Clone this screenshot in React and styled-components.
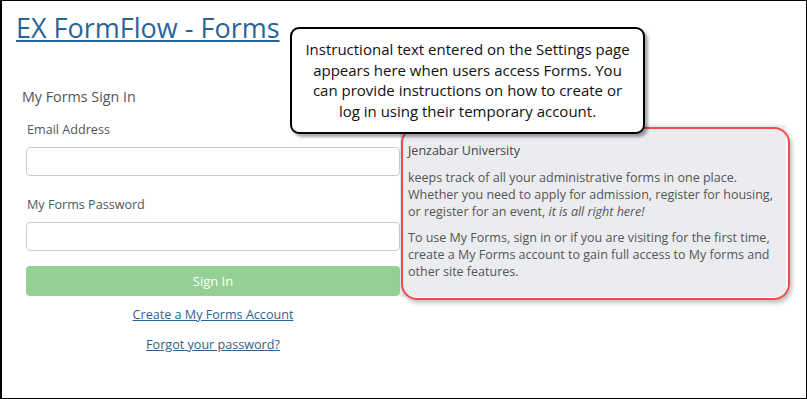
import React from 'react';
import styled, { createGlobalStyle } from 'styled-components';

const GlobalStyle = createGlobalStyle`
  html, body {
    margin: 0;
    padding: 0;
    background: #fff;
  }
  body {
    font-family: "Open Sans", "Liberation Sans", sans-serif;
  }
`;

const Frame = styled.div`
  position: relative;
  box-sizing: border-box;
  width: 807px;
  height: 399px;
  border: 1px solid #000;
  border-left-width: 2px;
  overflow: hidden;
`;

const Title = styled.a`
  display: inline-block;
  margin: 11px 0 0 14px;
  font-size: 27px;
  line-height: 32px;
  color: #2a6496;
  text-decoration: underline;
  text-decoration-thickness: 1.5px;
  text-underline-offset: 2px;
`;

const SignInHeading = styled.h2`
  margin: 43px 0 0 20px;
  font-size: 14.3px;
  font-weight: 400;
  line-height: 20px;
  color: #555;
`;

const Row = styled.div`
  display: flex;
  align-items: flex-start;
  margin-top: 12px;
`;

const FormColumn = styled.form`
  display: flex;
  flex-direction: column;
  width: 374px;
  margin-left: 24px;
`;

const Label = styled.label`
  font-size: 12.6px;
  line-height: 18px;
  color: #555;
  margin: 2px 0 8px 1px;
`;

const Input = styled.input`
  box-sizing: border-box;
  height: 29px;
  border: 1px solid #ccc;
  border-radius: 4px;
  margin-bottom: ${p => p.$last ? '15px' : '18px'};
  font: inherit;
`;

const Button = styled.button`
  height: 30px;
  border: none;
  border-radius: 4px;
  background: #94d094;
  color: #fff;
  font-family: inherit;
  font-size: 13px;
  cursor: pointer;
`;

const LinkLine = styled.a`
  align-self: center;
  margin-top: ${p => p.$gap}px;
  font-size: 12.6px;
  line-height: 18px;
  color: #2a6496;
  text-decoration: underline;
`;

const Panel = styled.div`
  position: relative;
  box-sizing: border-box;
  width: 386px;
  margin-top: 6px;
  padding: 17px 3px 17px 8px;
  background: #ebecf0;
  font-size: 12.5px;
  line-height: 17px;
  color: #555;
`;

const Highlight = styled.div`
  position: absolute;
  top: 2px;
  left: 1px;
  right: -4px;
  bottom: -3px;
  border: 2px solid #f24a4a;
  border-radius: 16px;
  box-shadow: 2px 3px 4px rgba(0, 0, 0, 0.25);
  pointer-events: none;
`;

const School = styled.div`
  position: relative;
  color: #444;
`;

const Para = styled.p`
  position: relative;
  margin: ${p => p.$gap}px 0 0;
`;

const Callout = styled.div`
  position: absolute;
  left: 288px;
  top: 26px;
  box-sizing: border-box;
  width: 355px;
  height: 107px;
  padding-top: 10px;
  border: 2.5px solid #000;
  border-radius: 9px;
  background: #fff;
  box-shadow: 3px 3px 3px rgba(0, 0, 0, 0.35);
  text-align: center;
  font-size: 15px;
  line-height: 20.7px;
  color: #111;
`;

export default function App() {
  return (
    <>
      <GlobalStyle />
      <Frame>
        <Title href="#">EX FormFlow - Forms</Title>
        <SignInHeading>My Forms Sign In</SignInHeading>
        <Row>
          <FormColumn onSubmit={e => e.preventDefault()}>
            <Label htmlFor="email">Email Address</Label>
            <Input id="email" type="text" />
            <Label htmlFor="pw">My Forms Password</Label>
            <Input id="pw" type="password" $last />
            <Button type="submit">Sign In</Button>
            <LinkLine href="#" $gap={10}>Create a My Forms Account</LinkLine>
            <LinkLine href="#" $gap={12}>Forgot your password?</LinkLine>
          </FormColumn>
          <Panel>
            <Highlight />
            <School>Jenzabar University</School>
            <Para $gap={10}>
              keeps track of all your administrative forms in one place. Whether you need to apply for admission, register for housing, or register for an event, <i>it is all right here!</i>
            </Para>
            <Para $gap={9}>
              To use My Forms, sign in or if you are visiting for the first time, create a My Forms account to gain full access to My forms and other site features.
            </Para>
          </Panel>
        </Row>
        <Callout>
          Instructional text entered on the Settings page<br />
          appears here when users access Forms. You<br />
          can provide instructions on how to create or<br />
          log in using their temporary account.
        </Callout>
      </Frame>
    </>
  );
}
